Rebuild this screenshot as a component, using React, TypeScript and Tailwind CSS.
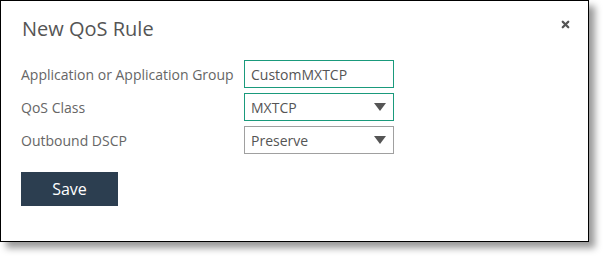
import { X } from 'lucide-react';

type Row = { label: string; value: string; select?: boolean; active?: boolean };

const rows: Row[] = [
  { label: 'Application or Application Group', value: 'CustomMXTCP', active: true },
  { label: 'QoS Class', value: 'MXTCP', select: true, active: true },
  { label: 'Outbound DSCP', value: 'Preserve', select: true },
];

const App: React.FC = () => {
  return (
    <div className="w-[605px] h-[258px] bg-white font-['Open_Sans',sans-serif]">
      <div className="relative w-[589px] h-[242px] border border-black bg-white shadow-[6px_6px_7px_rgba(0,0,0,0.4)] pl-5 pt-[14px]">
        <button className="absolute top-[18px] right-[17px] text-[#555]">
          <X size={11} strokeWidth={5} />
        </button>

        <h1 className="text-[20px] leading-[28px] text-[#555] ml-px">New QoS Rule</h1>

        <div className="mt-[17px] flex flex-col gap-[5px]">
          {rows.map((row) => (
            <div key={row.label} className="flex items-center">
              <label className="w-[223px] text-[14px] text-[#666]">{row.label}</label>
              <div
                className={`flex items-center justify-between w-[150px] h-[28px] px-[6px] border text-[14px] text-[#555] ${
                  row.active ? 'border-[#1a9a7c]' : 'border-[#a0a0a0]'
                }`}
              >
                <span>{row.value}</span>
                {row.select && (
                  <svg width="12" height="8" viewBox="0 0 12 8" className="mr-[1px]">
                    <path d="M0 0H12L6 8Z" fill="#555" />
                  </svg>
                )}
              </div>
            </div>
          ))}
        </div>

        <button className="mt-[18px] w-[97px] h-[34px] bg-[#2c3e50] text-white text-[16px]">
          Save
        </button>
      </div>
    </div>
  );
};

export default App;
